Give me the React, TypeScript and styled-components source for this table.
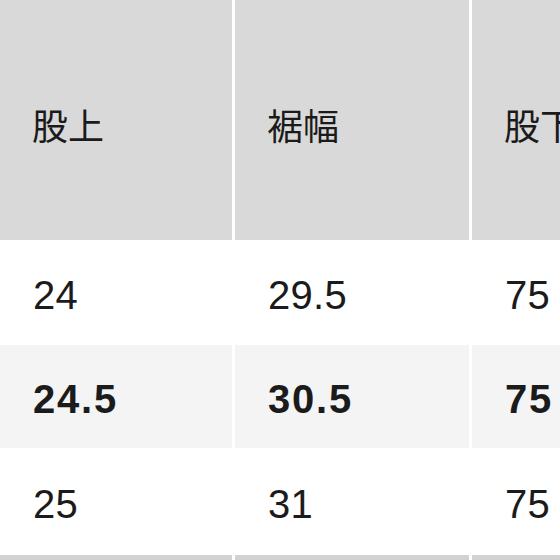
import styled, { createGlobalStyle } from 'styled-components';

const GlobalStyle = createGlobalStyle`
    html, body {
        margin: 0;
        padding: 0;
        background: #fff;
    }
    body {
        width: 560px;
        height: 560px;
        overflow: hidden;
    }
`;

const Table = styled.div`
    width: 560px;
    height: 560px;
    overflow: hidden;
    display: flex;
    flex-direction: column;
    background: #fff;
    color: #1b1b1b;
`;

type Tone = 'head' | 'plain' | 'shade' | 'edge';

const tones: Record<Tone, string> = {
    head: '#d9d9d9',
    plain: '#ffffff',
    shade: '#f4f4f4',
    edge: '#d2d2d2',
};

const Row = styled.div<{ $height: number }>`
    display: grid;
    grid-template-columns: 232px 234px 234px;
    column-gap: 3px;
    height: ${({ $height }) => $height}px;
    flex-shrink: 0;
`;

const Cell = styled.div<{ $tone: Tone; $bold?: boolean }>`
    background: ${({ $tone }) => tones[$tone]};
    display: flex;
    align-items: center;
    padding: 6px 0 0 33px;
    box-sizing: border-box;
    white-space: nowrap;
    font-family: 'Liberation Sans', Arial, 'Noto Sans CJK JP', sans-serif;
    font-size: 40px;
    font-weight: ${({ $bold }) => ($bold ? 700 : 400)};
    letter-spacing: ${({ $bold }) => ($bold ? '1.8px' : '0.3px')};
`;

const HeadCell = styled(Cell)`
    font-family: 'Noto Sans CJK JP', sans-serif;
    font-size: 36px;
    letter-spacing: 0;
    padding: 8px 0 0 32px;
`;

const headers = ['股上', '裾幅', '股下'];

const rows: { values: string[]; tone: Tone; bold?: boolean; height: number }[] = [
    { values: ['24', '29.5', '75'], tone: 'plain', height: 105 },
    { values: ['24.5', '30.5', '75'], tone: 'shade', bold: true, height: 103 },
    { values: ['25', '31', '75'], tone: 'plain', height: 107 },
];

export default function App() {
    return (
        <>
            <GlobalStyle />
            <Table>
                <Row $height={240}>
                    {headers.map((h) => (
                        <HeadCell key={h} $tone="head">
                            {h}
                        </HeadCell>
                    ))}
                </Row>
                {rows.map((r, i) => (
                    <Row key={i} $height={r.height}>
                        {r.values.map((v, j) => (
                            <Cell key={j} $tone={r.tone} $bold={r.bold}>
                                {v}
                            </Cell>
                        ))}
                    </Row>
                ))}
                <Row $height={20}>
                    <Cell $tone="edge" />
                    <Cell $tone="edge" />
                    <Cell $tone="edge" />
                </Row>
            </Table>
        </>
    );
}
